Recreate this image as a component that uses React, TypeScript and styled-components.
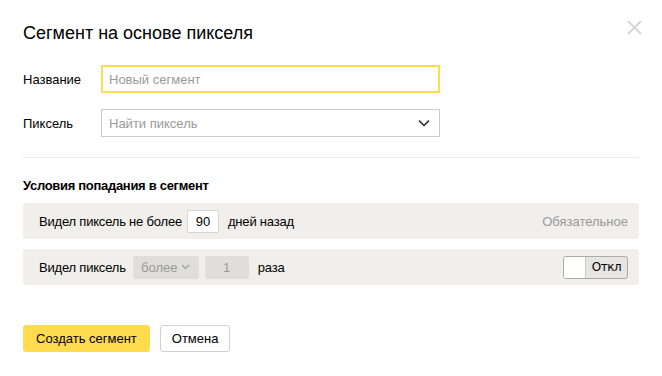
import React from "react";
import styled, { createGlobalStyle } from "styled-components";

const Global = createGlobalStyle`
  html, body { margin: 0; padding: 0; background: #fff; }
  body { font-family: "Liberation Sans", Arial, sans-serif; color: #000; }
  * { box-sizing: border-box; }
`;

const Dialog = styled.div`
  position: relative;
  width: 662px;
  height: 376px;
  padding: 22px 23px 0 23px;
  background: #fff;
`;

const Title = styled.h1`
  margin: 0;
  font-size: 18px;
  font-weight: normal;
  line-height: 23px;
  color: #000;
`;

const Close = styled.button`
  position: absolute;
  top: 20px;
  right: 20px;
  width: 15px;
  height: 15px;
  padding: 0;
  border: 0;
  background: none;
  display: flex;
`;

const Form = styled.div`
  display: flex;
  flex-direction: column;
  gap: 16px;
  margin-top: 20px;
  width: 417px;
`;

const Row = styled.div`
  display: flex;
  align-items: center;
`;

const Label = styled.div`
  width: 78px;
  font-size: 13px;
`;

const Field = styled.div<{ $focused?: boolean }>`
  flex: 1;
  height: 28px;
  display: flex;
  align-items: center;
  justify-content: space-between;
  padding: 0 9px 0 ${p => (p.$focused ? 6 : 7)}px;
  border: ${p => (p.$focused ? "2px solid #ffdb4d" : "1px solid #ccc")};
  font-size: 13px;
  color: #999;
`;

const Divider = styled.div`
  height: 1px;
  background: #ebebeb;
  margin-top: 20px;
`;

const SectionTitle = styled.div`
  margin-top: 19px;
  font-size: 13px;
  font-weight: bold;
  letter-spacing: -0.3px;
  line-height: 18px;
`;

const Panels = styled.div`
  display: flex;
  flex-direction: column;
  gap: 10px;
  margin-top: 8px;
`;

const Panel = styled.div`
  height: 36px;
  display: flex;
  align-items: center;
  padding: 0 11px 0 16px;
  background: #f0efeb;
  border-radius: 3px;
  font-size: 13px;
`;

const Text = styled.span<{ $ml?: number }>`
  margin-left: ${p => p.$ml ?? 0}px;
  letter-spacing: -0.2px;
`;

const NumBox = styled.div`
  width: 32px;
  height: 23px;
  margin-left: 5px;
  display: flex;
  align-items: center;
  justify-content: center;
  background: #fff;
  border: 1px solid #d6d5d1;
  border-radius: 2px;
  font-size: 13px;
`;

const DisabledBox = styled.div<{ $w: number; $ml: number }>`
  width: ${p => p.$w}px;
  height: 23px;
  margin-left: ${p => p.$ml}px;
  display: flex;
  align-items: center;
  justify-content: center;
  gap: 4px;
  background: #dfdedb;
  border-radius: 3px;
  color: #999;
  font-size: 13px;
`;

const Hint = styled.span`
  margin-left: auto;
  color: #999;
`;

const Toggle = styled.div`
  margin-left: auto;
  width: 65px;
  height: 23px;
  display: flex;
  border: 1px solid #aaa;
  border-radius: 3px;
  overflow: hidden;
  background: #e6e5e2;
`;

const Knob = styled.div`
  width: 22px;
  background: #fff;
  border-right: 1px solid #c8c8c8;
`;

const ToggleText = styled.div`
  flex: 1;
  display: flex;
  align-items: center;
  justify-content: center;
  font-family: "DejaVu Sans", sans-serif;
  font-size: 12px;
  letter-spacing: -0.5px;
`;

const Buttons = styled.div`
  display: flex;
  gap: 10px;
  margin-top: 40px;
`;

const Button = styled.button<{ $primary?: boolean }>`
  height: 27px;
  padding: 0 ${p => (p.$primary ? 13 : 11)}px;
  font-family: "Liberation Sans", Arial, sans-serif;
  font-size: 13px;
  color: #000;
  border-radius: 3px;
  border: ${p => (p.$primary ? "0" : "1px solid #d0d0d0")};
  background: ${p => (p.$primary ? "#ffdb4d" : "#fff")};
`;

export default function App() {
  return (
    <>
      <Global />
      <Dialog>
        <Title>Сегмент на основе пикселя</Title>
        <Close aria-label="Закрыть">
          <svg width="15" height="15" viewBox="0 0 15 15">
            <path d="M1 1L14 14M14 1L1 14" stroke="#ccc" strokeWidth="1.6" />
          </svg>
        </Close>
        <Form>
          <Row>
            <Label>Название</Label>
            <Field $focused>Новый сегмент</Field>
          </Row>
          <Row>
            <Label>Пиксель</Label>
            <Field>
              Найти пиксель
              <svg width="12" height="8" viewBox="0 0 12 8">
                <path d="M1 1.5L6 6.5L11 1.5" stroke="#222" strokeWidth="1.5" fill="none" />
              </svg>
            </Field>
          </Row>
        </Form>
        <Divider />
        <SectionTitle>Условия попадания в сегмент</SectionTitle>
        <Panels>
          <Panel>
            <Text>Видел пиксель не более</Text>
            <NumBox>90</NumBox>
            <Text $ml={9}>дней назад</Text>
            <Hint>Обязательное</Hint>
          </Panel>
          <Panel>
            <Text>Видел пиксель</Text>
            <DisabledBox $w={66} $ml={7}>
              более
              <svg width="9" height="6" viewBox="0 0 9 6">
                <path d="M1 1L4.5 4.5L8 1" stroke="#999" strokeWidth="1.2" fill="none" />
              </svg>
            </DisabledBox>
            <DisabledBox $w={44} $ml={6}>1</DisabledBox>
            <Text $ml={9}>раза</Text>
            <Toggle>
              <Knob />
              <ToggleText>Откл</ToggleText>
            </Toggle>
          </Panel>
        </Panels>
        <Buttons>
          <Button $primary>Создать сегмент</Button>
          <Button>Отмена</Button>
        </Buttons>
      </Dialog>
    </>
  );
}
